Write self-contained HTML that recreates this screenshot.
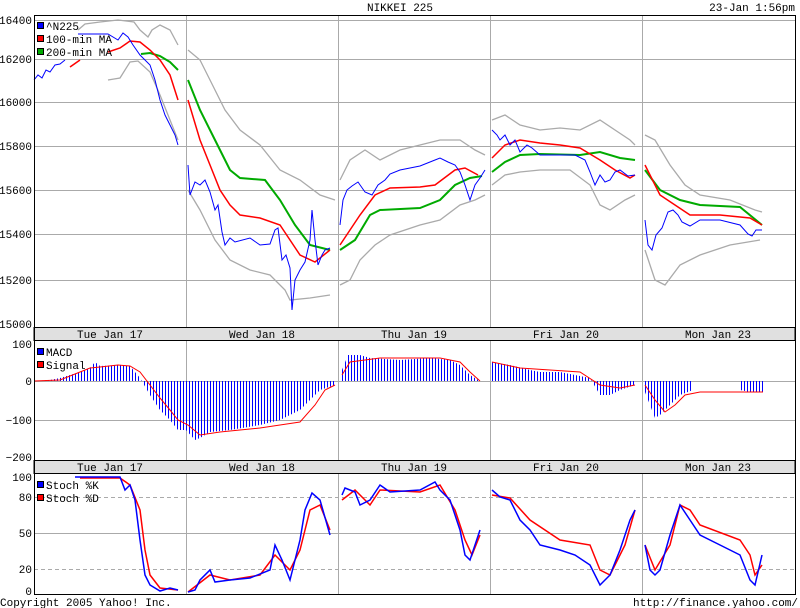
<!DOCTYPE html>
<html><head><meta charset="utf-8"><style>
html,body{margin:0;padding:0;background:#fff;width:800px;height:608px;overflow:hidden}
svg{display:block;font-family:"Liberation Mono","DejaVu Sans Mono",monospace;font-size:11px}
</style></head><body>
<svg width="800" height="608" xmlns="http://www.w3.org/2000/svg">
<defs>
<pattern id="bars" width="3" height="10" patternUnits="userSpaceOnUse"><rect x="0" y="0" width="1" height="10" fill="#0000ff"/></pattern>
</defs>
<text x="400" y="11" text-anchor="middle">NIKKEI 225</text>
<text x="795" y="11" text-anchor="end">23-Jan 1:56pm</text>

<!-- main grid -->
<g stroke="#aaa" stroke-width="1">
<line x1="34" y1="20.5" x2="795" y2="20.5"/><line x1="34" y1="59.5" x2="795" y2="59.5"/>
<line x1="34" y1="102.5" x2="795" y2="102.5"/><line x1="34" y1="146.5" x2="795" y2="146.5"/>
<line x1="34" y1="190.5" x2="795" y2="190.5"/><line x1="34" y1="234.5" x2="795" y2="234.5"/>
<line x1="34" y1="280.5" x2="795" y2="280.5"/>
<line x1="186.5" y1="15" x2="186.5" y2="594"/><line x1="338.5" y1="15" x2="338.5" y2="594"/>
<line x1="490.5" y1="15" x2="490.5" y2="594"/><line x1="642.5" y1="15" x2="642.5" y2="594"/>
<!-- macd grid -->
<line x1="34" y1="381.5" x2="795" y2="381.5"/><line x1="34" y1="420.5" x2="795" y2="420.5"/>
<!-- stoch grid -->
<line x1="34" y1="533.5" x2="795" y2="533.5"/>
</g>
<g stroke="#aaa" stroke-dasharray="4,3">
<line x1="34" y1="497.5" x2="795" y2="497.5"/><line x1="34" y1="569.5" x2="795" y2="569.5"/>
</g>

<!-- axis labels main -->
<g text-anchor="end">
<text x="32" y="24">16400</text><text x="32" y="63">16200</text><text x="32" y="106">16000</text>
<text x="32" y="150">15800</text><text x="32" y="194">15600</text><text x="32" y="238">15400</text>
<text x="32" y="284">15200</text><text x="32" y="328">15000</text>
<text x="32" y="348">100</text><text x="32" y="385">0</text><text x="32" y="424">−100</text><text x="32" y="461">−200</text>
<text x="32" y="481">100</text><text x="32" y="501">80</text><text x="32" y="537">50</text>
<text x="32" y="573">20</text><text x="32" y="595">0</text>
</g>

<!-- bollinger grey -->
<g fill="none" stroke="#aaa" stroke-width="1.3">
<polyline points="78,30 85,24 100,22 118,20 134,22 140,30 148,37 152,30 160,25 170,30 178,45"/>
<polyline points="108,80 120,78 130,62 138,61 150,72 160,95 170,120 178,140"/>
<polyline points="188,50 200,60 210,80 225,110 240,130 260,145 280,170 300,180 320,195 335,200"/>
<polyline points="188,190 200,210 215,240 230,260 250,270 270,275 285,290 290,300 310,298 330,295"/>
<polyline points="340,180 350,160 365,150 380,160 400,150 420,145 440,140 460,140 475,150 485,155"/>
<polyline points="340,285 350,280 360,260 375,245 390,235 420,225 440,220 460,205 475,200 485,195"/>
<polyline points="492,120 505,115 520,125 540,130 560,128 580,130 600,120 615,130 630,140 635,145"/>
<polyline points="492,185 505,175 520,172 540,170 570,170 590,185 600,205 610,210 625,200 635,195"/>
<polyline points="645,135 655,140 670,165 685,185 700,195 730,200 755,210 762,212"/>
<polyline points="645,250 655,280 665,285 680,265 700,255 730,245 760,240"/>
</g>
<!-- green 200 MA -->
<g fill="none" stroke="#00aa00" stroke-width="2">
<polyline points="141,54 150,53 160,56 170,62 178,70"/>
<polyline points="188,80 200,110 215,140 230,170 240,178 265,180 280,200 295,225 310,245 330,250"/>
<polyline points="340,250 355,240 370,215 380,210 420,208 440,200 455,185 470,178 482,176"/>
<polyline points="492,172 505,162 520,155 540,154 580,155 600,152 620,158 635,160"/>
<polyline points="645,170 660,190 680,200 700,205 740,207 762,225"/>
</g>
<!-- red 100 MA -->
<g fill="none" stroke="#ff0000" stroke-width="1.5">
<polyline points="70,67 80,60"/>
<polyline points="108,52 120,48 130,41 140,42 150,50 160,60 170,75 178,100"/>
<polyline points="188,100 200,140 210,165 220,190 230,205 240,215 260,218 280,225 300,255 315,262 330,250"/>
<polyline points="340,245 350,230 360,215 375,195 390,188 420,187 435,185 455,170 465,168 478,175"/>
<polyline points="492,158 505,145 520,140 540,143 560,145 580,148 600,160 615,170 630,178 635,175"/>
<polyline points="645,165 660,195 675,205 690,215 720,215 750,218 762,225"/>
</g>
<!-- blue price -->
<g fill="none" stroke="#0000ff" stroke-width="1">
<polyline points="34,80 38,75 42,78 46,70 50,72 55,65 60,64 65,60"/>
<polyline points="78,34 108,34 118,40 123,33 128,37 133,45 140,55 150,65 155,80 160,100 165,115 170,125 175,135 178,145"/>
<polyline points="188,165 190,195 195,182 200,185 205,180 210,192 215,210 218,205 222,232 225,245 230,238 235,242 250,238 260,245 270,244 275,230 278,228 282,260 286,255 290,268 292,310 295,280 300,270 305,262 310,240 312,210 315,240 318,265 322,255 325,250 330,248"/>
<polyline points="340,225 343,200 347,190 352,186 358,182 365,192 372,195 378,185 385,180 390,174 400,170 420,166 435,160 440,158 448,162 455,165 460,172 465,185 470,200 475,185 480,178 485,170"/>
<polyline points="492,130 497,135 500,140 505,135 510,145 515,140 520,152 527,145 532,148 540,155 560,155 575,155 585,160 590,172 595,185 600,175 605,182 610,180 615,172 620,170 628,176 635,175"/>
<polyline points="645,220 648,245 652,250 656,235 662,228 668,212 673,210 678,215 682,222 690,226 700,220 720,220 740,225 748,234 752,236 756,230 762,230"/>
</g>

<!-- MACD bars -->
<g fill="url(#bars)">
<polygon points="34,381 50,380 60,378 70,375 80,372 90,368 95,362 100,366 120,365 130,366 140,378 150,395 160,410 170,420 178,430 186,430 195,440 200,438 210,432 230,430 260,425 280,420 300,410 320,390 335,385 335,381"/>
<polygon points="342,381 342,370 348,355 360,355 370,358 400,360 430,358 450,360 460,365 470,375 480,381"/>
<polygon points="492,381 492,362 510,365 530,370 540,372 560,372 590,378 600,395 610,395 620,390 635,385 635,381"/>
<polygon points="643,381 645,392 650,405 655,418 660,415 670,405 680,395 693,390 693,381"/>
<polygon points="740,381 740,390 750,392 763,392 763,381"/>
</g>
<g fill="none" stroke="#ff0000" stroke-width="1">
<polyline points="34,381 60,380 80,372 90,368 100,367 118,365 130,366 140,372 150,385 160,398 170,410 178,420 188,425 200,435 220,432 260,428 280,425 300,422 315,405 325,390 335,385"/>
<polyline points="342,375 350,362 380,358 440,358 460,362 470,372 480,381"/>
<polyline points="492,362 520,368 580,372 600,385 620,388 635,385"/>
<polyline points="645,385 655,400 665,412 675,405 685,395 700,392 740,392 763,392"/>
</g>

<!-- Stoch -->
<g fill="none" stroke="#ff0000" stroke-width="1.5">
<polyline points="80,478 120,478 130,485 140,510 145,550 150,575 160,588 178,590"/>
<polyline points="188,592 210,575 230,580 260,575 275,555 290,570 300,550 310,510 320,505 330,530"/>
<polyline points="342,500 355,490 370,505 380,490 420,492 440,485 455,510 465,540 472,555 480,535"/>
<polyline points="492,495 510,498 530,520 560,540 590,545 600,570 610,575 625,545 635,510"/>
<polyline points="645,545 655,570 670,545 680,505 690,510 700,525 740,540 750,555 755,575 762,565"/>
</g>
<g fill="none" stroke="#0000ff" stroke-width="1.5">
<polyline points="75,477 120,477 125,490 130,485 135,500 140,540 145,575 150,585 160,591 170,588 178,590"/>
<polyline points="188,592 195,590 200,580 210,570 215,582 230,580 250,578 270,570 275,545 282,560 290,580 300,540 305,510 312,493 320,500 330,535"/>
<polyline points="342,495 345,488 355,492 360,505 370,500 380,485 390,492 420,490 435,482 440,490 450,500 460,530 465,555 470,560 480,530"/>
<polyline points="492,490 500,497 510,500 520,520 530,530 540,545 560,550 575,555 590,565 600,585 610,575 620,550 630,520 635,510"/>
<polyline points="645,545 650,570 655,575 660,570 670,535 680,505 690,520 700,535 720,545 740,555 750,580 755,585 762,555"/>
</g>

<!-- label rows -->
<rect x="34" y="327.5" width="761" height="13" fill="#e0e0e0" stroke="#000"/>
<rect x="34" y="460.5" width="761" height="13" fill="#e0e0e0" stroke="#000"/>
<g text-anchor="middle">
<text x="110" y="338">Tue Jan 17</text><text x="262" y="338">Wed Jan 18</text><text x="414" y="338">Thu Jan 19</text><text x="566" y="338">Fri Jan 20</text><text x="718" y="338">Mon Jan 23</text>
<text x="110" y="471">Tue Jan 17</text><text x="262" y="471">Wed Jan 18</text><text x="414" y="471">Thu Jan 19</text><text x="566" y="471">Fri Jan 20</text><text x="718" y="471">Mon Jan 23</text>
</g>

<!-- frame -->
<g stroke="#000" fill="none">
<line x1="34.5" y1="15" x2="34.5" y2="594"/>
<line x1="795.5" y1="15" x2="795.5" y2="594"/>
<line x1="34" y1="15.5" x2="796" y2="15.5"/>
<line x1="34" y1="594.5" x2="796" y2="594.5"/>
</g>

<!-- legends -->
<g stroke="#000" stroke-width="1">
<rect x="37.5" y="22.5" width="6" height="6" fill="#0000ff"/>
<rect x="37.5" y="35.5" width="6" height="6" fill="#ff0000"/>
<rect x="37.5" y="48.5" width="6" height="6" fill="#00aa00"/>
<rect x="37.5" y="348.5" width="6" height="6" fill="#0000ff"/>
<rect x="37.5" y="361.5" width="6" height="6" fill="#ff0000"/>
<rect x="37.5" y="481.5" width="6" height="6" fill="#0000ff"/>
<rect x="37.5" y="494.5" width="6" height="6" fill="#ff0000"/>
</g>
<text x="46" y="30">^N225</text><text x="46" y="43">100-min MA</text><text x="46" y="56">200-min MA</text>
<text x="46" y="356">MACD</text><text x="46" y="369">Signal</text>
<text x="46" y="489">Stoch %K</text><text x="46" y="502">Stoch %D</text>

<text x="0" y="606">Copyright 2005 Yahoo! Inc.</text>
<text x="798" y="606" text-anchor="end">http://finance.yahoo.com/</text>
</svg>
</body></html>
